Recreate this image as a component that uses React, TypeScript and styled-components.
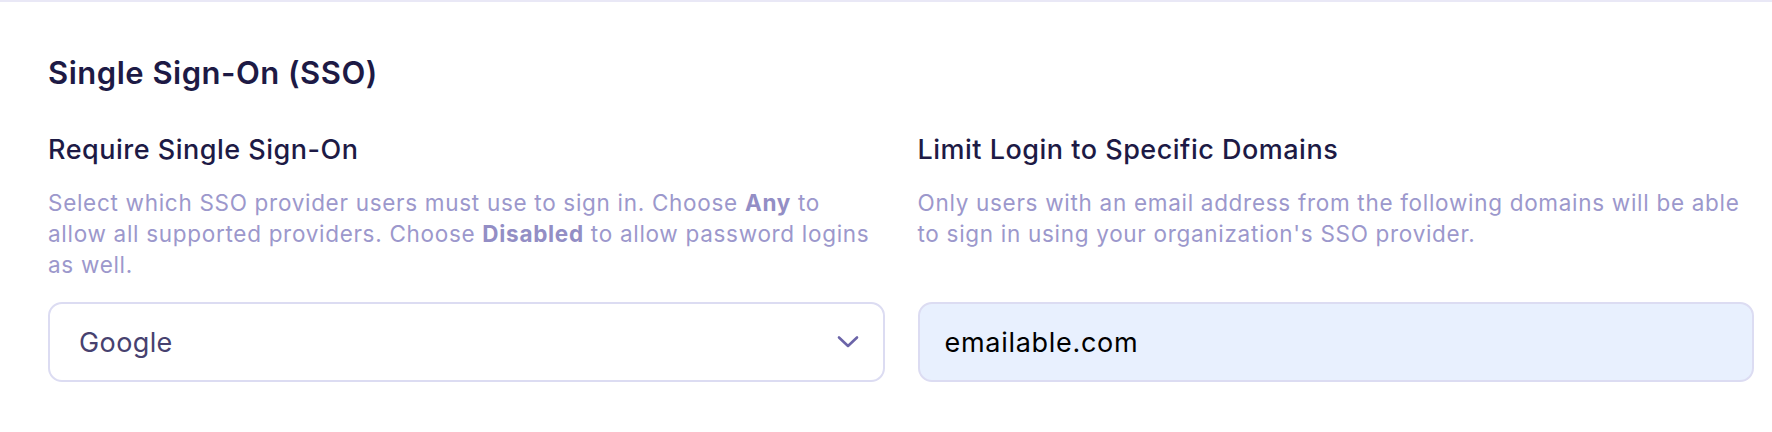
import React from "react";
import styled, { createGlobalStyle } from "styled-components";

const GlobalStyle = createGlobalStyle`
  html, body {
    margin: 0;
    padding: 0;
    background: #ffffff;
  }
  body {
    font-family: Inter, "Noto Sans", sans-serif;
    -webkit-font-smoothing: antialiased;
  }
`;

const Page = styled.div`
  border-top: 2px solid #e9e8f6;
  padding: 52px 18px 0 48px;
  box-sizing: border-box;
  width: 1772px;
  height: 432px;
`;

const Title = styled.h2`
  margin: 0;
  font-size: 31px;
  line-height: 38px;
  letter-spacing: 0.5px;
  font-weight: 600;
  color: #1d1a45;
`;

const Grid = styled.div`
  display: grid;
  grid-template-columns: 1fr 1fr;
  column-gap: 33px;
  margin-top: 41px;
`;

const Field = styled.div`
  display: flex;
  flex-direction: column;
  min-width: 0;
`;

const Label = styled.label`
  font-size: 27px;
  line-height: 34px;
  letter-spacing: 0.5px;
  font-weight: 500;
  color: #1d1a45;
`;

const Help = styled.p`
  margin: 20px 0 0;
  font-size: 22.5px;
  line-height: 31px;
  letter-spacing: 0.7px;
  color: #9c98cc;
  height: 93px;
  white-space: nowrap;

  strong {
    font-weight: 700;
    color: #938ec5;
  }
`;

const Box = styled.div<{ $filled?: boolean }>`
  margin-top: 22px;
  height: 80px;
  box-sizing: border-box;
  border: 2px solid #dcdcf2;
  border-radius: 14px;
  background: ${(p) => (p.$filled ? "#e8f0fe" : "#ffffff")};
  display: flex;
  align-items: center;
  justify-content: space-between;
  padding: ${(p) => (p.$filled ? "0 24px 0 25px" : "0 24px 0 29px")};
`;

const BoxText = styled.span<{ $filled?: boolean }>`
  font-size: 27px;
  letter-spacing: ${(p) => (p.$filled ? "0.7px" : "0.4px")};
  color: ${(p) => (p.$filled ? "#000000" : "#47416f")};
`;

const Chevron = () => (
  <svg width="22" height="14" viewBox="0 0 22 14" fill="none">
    <path
      d="M2 2.5 L11 11 L20 2.5"
      stroke="#6b64a8"
      strokeWidth="2.6"
      strokeLinecap="round"
      strokeLinejoin="round"
    />
  </svg>
);

export default function App() {
  return (
    <>
      <GlobalStyle />
      <Page>
        <Title>Single Sign-On (SSO)</Title>
        <Grid>
          <Field>
            <Label>Require Single Sign-On</Label>
            <Help>
              Select which SSO provider users must use to sign in. Choose <strong>Any</strong> to
              <br />
              allow all supported providers. Choose <strong>Disabled</strong> to allow password logins
              <br />
              as well.
            </Help>
            <Box>
              <BoxText>Google</BoxText>
              <Chevron />
            </Box>
          </Field>
          <Field>
            <Label>Limit Login to Specific Domains</Label>
            <Help>
              Only users with an email address from the following domains will be able
              <br />
              to sign in using your organization's SSO provider.
            </Help>
            <Box $filled>
              <BoxText $filled>emailable.com</BoxText>
            </Box>
          </Field>
        </Grid>
      </Page>
    </>
  );
}
